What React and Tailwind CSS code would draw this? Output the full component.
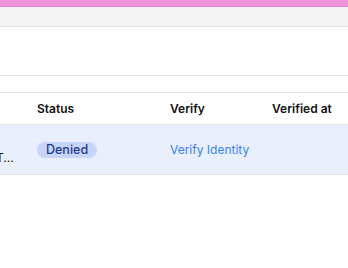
export default function App() {
  return (
    <div className="w-[348px] h-[268px] overflow-hidden bg-white" style={{ fontFamily: 'Inter, "Noto Sans", sans-serif' }}>
      <div className="h-[7px] bg-[#f093de] border-b border-[#e283d2]" />
      <div className="h-[20px] bg-[#f4f4f4] border-b border-[#e3e3e3]" />
      <div className="h-[49px] bg-white border-b border-[#e3e3e3]" />
      <div className="h-[17px] bg-white border-b border-[#e3e3e3]" />
      <div className="h-[32px] flex items-center pt-[1px] border-b border-[#e3e3e3] text-[12px] font-semibold text-[#111]">
        <div className="w-[37px] shrink-0" />
        <div className="w-[133px] shrink-0">Status</div>
        <div className="w-[102px] shrink-0">Verify</div>
        <div className="whitespace-nowrap">Verified at</div>
      </div>
      <div className="h-[50px] flex items-center pt-[1px] bg-[#e9effd] border-b border-[#e3e3e3] text-[12px]">
        <div className="w-[37px] shrink-0 self-stretch flex items-end pb-[10px] overflow-hidden">
          <span className="-ml-[4px] whitespace-nowrap text-[#111] leading-none">T...</span>
        </div>
        <div className="w-[133px] shrink-0 flex">
          <span className="h-[16px] px-[9px] rounded-full bg-[#c8d5fb] text-[#1e3a8a] font-medium leading-[16px] text-[12.5px]">Denied</span>
        </div>
        <div className="w-[102px] shrink-0 text-[#3b7ff5] whitespace-nowrap">Verify Identity</div>
        <div />
      </div>
    </div>
  );
}
